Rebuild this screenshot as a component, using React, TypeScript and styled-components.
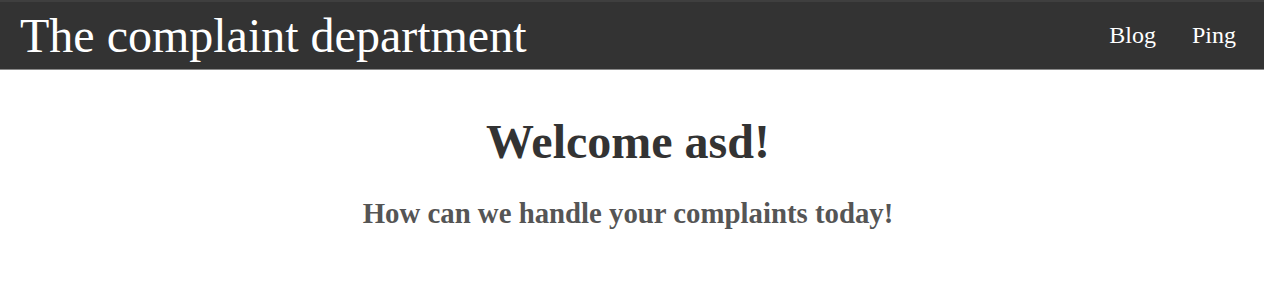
import React from "react";
import styled, { createGlobalStyle } from "styled-components";

const GlobalStyle = createGlobalStyle`
  body {
    margin: 0;
    padding: 0;
    background: #fff;
    font-family: "Liberation Serif", "Times New Roman", serif;
  }
`;

const Header = styled.header`
  display: flex;
  align-items: center;
  justify-content: space-between;
  height: 67px;
  padding: 0 28px 0 20px;
  background: #333;
  border-top: 2px solid #3f3f3f;
  border-bottom: 1px solid #8a8a8a;
`;

const Title = styled.h1`
  margin: 0;
  font-size: 48px;
  font-weight: normal;
  color: #fff;
`;

const Nav = styled.nav`
  display: flex;
  gap: 36px;
`;

const NavLink = styled.a`
  font-size: 24px;
  color: #fff;
  text-decoration: none;
  cursor: pointer;
`;

const Main = styled.main`
  display: flex;
  flex-direction: column;
  align-items: center;
  padding: 44px 8px 0 0;
`;

const Welcome = styled.h2`
  margin: 0;
  font-size: 48px;
  font-weight: bold;
  color: #333;
`;

const Subtitle = styled.h3`
  margin: 28px 0 0;
  font-size: 28.8px;
  font-weight: bold;
  color: #555;
`;

export default function App() {
  return (
    <>
      <GlobalStyle />
      <Header>
        <Title>The complaint department</Title>
        <Nav>
          <NavLink href="#">Blog</NavLink>
          <NavLink href="#">Ping</NavLink>
        </Nav>
      </Header>
      <Main>
        <Welcome>Welcome asd!</Welcome>
        <Subtitle>How can we handle your complaints today!</Subtitle>
      </Main>
    </>
  );
}
